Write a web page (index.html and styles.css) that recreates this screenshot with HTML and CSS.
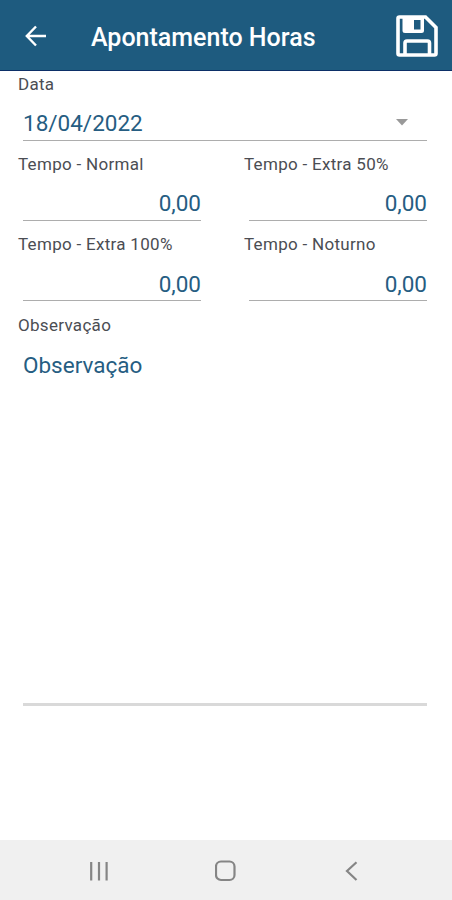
FILE: index.html
```html
<!DOCTYPE html>
<html lang="pt-BR">
<head>
<meta charset="utf-8">
<title>Apontamento Horas</title>
<link rel="stylesheet" href="styles.css">
</head>
<body>
<header class="bar">
  <svg class="back" viewBox="0 0 22 22"><path d="M21 11H2.500M11 1.500 1.800 11 11 20.500"/></svg>
  <h1 class="title"><span>Apontamento Horas</span></h1>
  <svg class="save" viewBox="0 0 42 42">
    <path class="outline" d="M3.500 2H29.500L40 12.500V38.500Q40 40 38.500 40H3.500Q2 40 2 38.500V3.500Q2 2 3.500 2Z"/>
    <path class="outline" d="M9 40V28Q9 26 11 26H31.500Q33.500 26 33.500 28V40"/>
    <path class="solid" fill-rule="evenodd" d="M6.500 3H28V15.500Q28 18 25.500 18H9Q6.500 18 6.500 15.500ZM18 5V14.500H24.500V5Z"/>
  </svg>
</header>
<main class="form">
  <section class="field">
    <div class="label"><span>Data</span></div>
    <div class="value date"><span>18/04/2022</span><svg class="caret" viewBox="0 0 12 7"><path d="M0 0H12L6 6.500Z"/></svg></div>
  </section>
  <div class="grid">
    <section class="field"><div class="label"><span>Tempo - Normal</span></div><div class="value num"><span>0,00</span></div></section>
    <section class="field"><div class="label"><span>Tempo - Extra 50%</span></div><div class="value num"><span>0,00</span></div></section>
    <section class="field"><div class="label"><span>Tempo - Extra 100%</span></div><div class="value num"><span>0,00</span></div></section>
    <section class="field"><div class="label"><span>Tempo - Noturno</span></div><div class="value num"><span>0,00</span></div></section>
  </div>
  <section class="field notes">
    <div class="label"><span>Observação</span></div>
    <div class="value area"><span>Observação</span></div>
  </section>
</main>
<nav class="nav">
  <svg viewBox="0 0 22 22"><path d="M3.200 2V20.500M11 2V20.500M18.600 2V20.500"/></svg>
  <svg viewBox="0 0 22 22"><rect x="1" y="1.500" width="18.500" height="18.500" rx="5"/></svg>
  <svg viewBox="0 0 22 22"><path d="M15.500 2.300 6 11 15.500 20"/></svg>
</nav>
</body>
</html>
```
FILE: styles.css
```css
* { box-sizing: border-box; }
body {
  margin: 0;
  height: 900px;
  display: flex;
  flex-direction: column;
  background: #fff;
  font-family: Roboto, sans-serif;
  overflow: hidden;
}
.bar {
  height: 70.5px;
  flex: none;
  display: flex;
  align-items: center;
  padding: 2px 14px 0 25px;
  background: #1e5b7f;
  border-bottom: 1.5px solid #0c2f67;
}
.back { width: 22px; height: 22px; fill: none; stroke: #fff; stroke-width: 2.4; }
.title {
  flex: 1;
  margin: 4px 0 0 44px;
  color: #fff;
  font-size: 25px;
  font-weight: 500;
  line-height: 32px;
  white-space: nowrap;
}
.save { width: 42px; height: 42px; }
.outline { fill: none; stroke: #fff; stroke-width: 3.6; }
.solid { fill: #fff; }
.form { flex: 1; padding-right: 25px; }
.field { height: 80.5px; padding-left: 18px; }
.form > .field:first-child { height: 80px; }
.label {
  height: 27px;
  line-height: 27px;
  font-size: 17px;
  letter-spacing: 0.3px;
  color: #4b4d53;
  white-space: nowrap;
}
.value {
  display: flex;
  align-items: center;
  height: 43px;
  margin-left: 5px;
  padding-top: 9px;
  border-bottom: 1.5px solid #adadad;
  color: #265d82;
  font-size: 22.5px;
}
.grid { display: grid; grid-template-columns: 201px 226px; }
.grid .field:nth-child(even) { padding-left: 43px; }
.num { justify-content: flex-end; }
.caret { width: 12px; height: 7px; margin: 0 19px 1px auto; fill: #999; }
.notes { height: 394px; }
.area { height: 367px; align-items: flex-start; border-bottom: 3px solid #d9d9d9; padding-top: 13px; }
.nav {
  height: 60px;
  flex: none;
  display: flex;
  justify-content: space-between;
  align-items: center;
  padding: 2px 89px 0 88px;
  background: #f0f0f0;
}
.nav svg { width: 22px; height: 22px; fill: none; stroke: #858585; stroke-width: 2.2; }
```
